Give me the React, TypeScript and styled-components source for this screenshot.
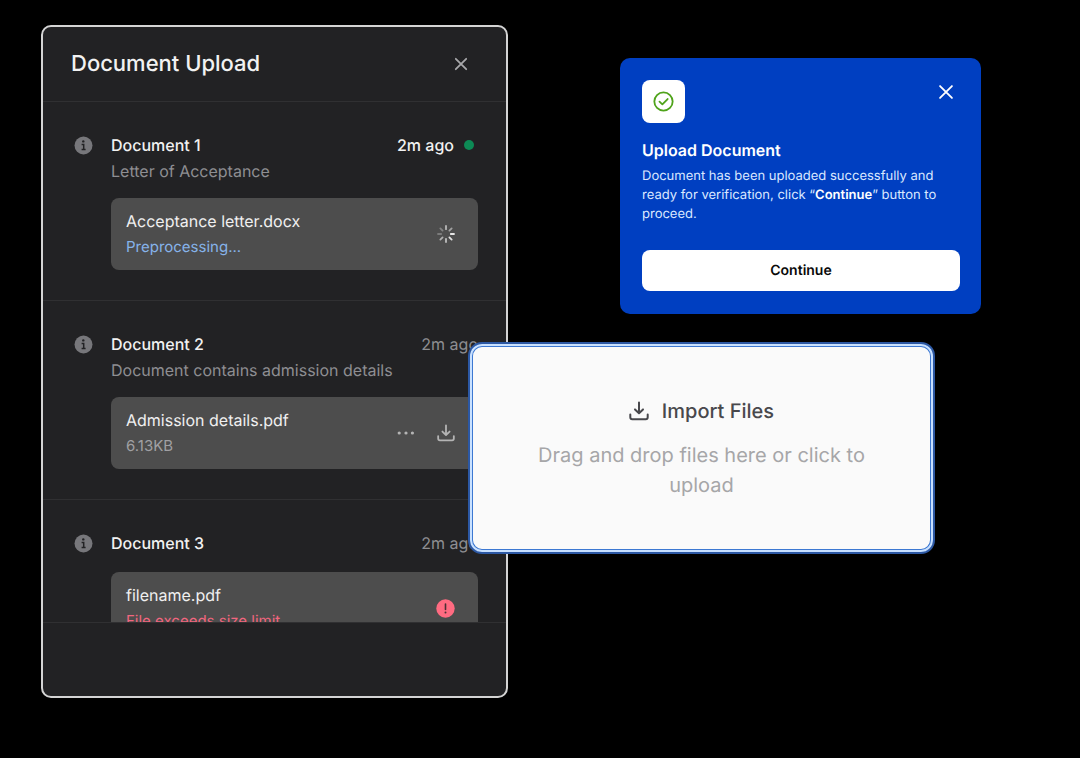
import React from "react";
import styled, { createGlobalStyle } from "styled-components";

const GlobalStyle = createGlobalStyle`
  *, *::before, *::after { box-sizing: border-box; }
  body {
    margin: 0;
    background: #000;
    font-family: Inter, "Liberation Sans", sans-serif;
    -webkit-font-smoothing: antialiased;
    text-rendering: geometricPrecision;
  }
  h1, h2, h3, p, ul { margin: 0; padding: 0; }
  button { font-family: inherit; text-rendering: inherit; cursor: pointer; }
`;

const Stage = styled.main`
  display: grid;
  grid-template-columns: minmax(0, 467px) minmax(0, 361px);
  column-gap: 112px;
  align-items: start;
  padding: 25px 41px;
`;

const Panel = styled.section`
  display: flex;
  flex-direction: column;
  background: #222224;
  border: 2px solid #d4d4d4;
  border-radius: 10px;
  overflow: hidden;
`;

const PanelHeader = styled.header`
  display: flex;
  align-items: center;
  justify-content: space-between;
  padding: 19px 38px 19px 28px;
  border-bottom: 1px solid #303032;
`;

const PanelTitle = styled.h1`
  font-size: 22px;
  line-height: 36px;
  font-weight: 500;
  color: #f2f2f2;
`;

const IconButton = styled.button<{ $color: string; $pad?: number }>`
  display: flex;
  padding: ${(p) => p.$pad ?? 0}px;
  border: 0;
  background: none;
  color: ${(p) => p.$color};
`;

const DocumentList = styled.ul`
  max-height: 520px;
  overflow-y: auto;
  scrollbar-width: none;
  list-style: none;
`;

const DocumentItem = styled.li`
  display: flex;
  align-items: flex-start;
  gap: 18px;
  padding: 29px 28px 30px 31px;

  & + & { border-top: 1px solid #303032; }
`;

const InfoMark = styled.span`
  display: flex;
  align-items: center;
  height: 28px;
`;

const DocumentBody = styled.div`
  flex: 1;
  min-width: 0;
`;

const TitleRow = styled.div`
  display: flex;
  align-items: center;
  justify-content: space-between;
`;

const DocumentTitle = styled.h2`
  font-size: 16px;
  line-height: 28px;
  font-weight: 500;
  color: #f2f2f2;
`;

const Time = styled.span<{ $fresh: boolean }>`
  display: flex;
  align-items: center;
  gap: 10px;
  padding-right: ${(p) => (p.$fresh ? "4px" : "0")};
  font-size: 16px;
  line-height: 28px;
  font-weight: ${(p) => (p.$fresh ? 500 : 400)};
  color: ${(p) => (p.$fresh ? "#f2f2f2" : "#8e8e92")};
`;

const FreshDot = styled.span`
  width: 10px;
  height: 10px;
  border-radius: 50%;
  background: #0d8a55;
`;

const Description = styled.p`
  font-size: 16px;
  line-height: 24px;
  color: #8e8e92;
`;

const FileCard = styled.div`
  display: flex;
  align-items: center;
  justify-content: space-between;
  margin-top: 15px;
  padding: 10px 23px 10px 15px;
  border-radius: 8px;
  background: #4d4d4d;
`;

const FileName = styled.h3`
  font-size: 16px;
  line-height: 26px;
  font-weight: 400;
  color: #f0f0f0;
`;

const statusColors = { busy: "#86b3ea", plain: "#a0a0a3", error: "#f2667f" };
type Tone = keyof typeof statusColors;

const FileStatus = styled.p<{ $tone: Tone }>`
  font-size: 15px;
  line-height: 26px;
  color: ${(p) => statusColors[p.$tone]};
`;

const Actions = styled.div`
  display: flex;
  align-items: center;
  gap: 22px;
`;

const PanelFooter = styled.footer`
  height: 74px;
  border-top: 1px solid #303032;
`;

const Side = styled.div`
  display: flex;
  flex-direction: column;
  gap: 28px;
  padding-top: 33px;
`;

const Notice = styled.section`
  padding: 22px 21px 23px 22px;
  border-radius: 10px;
  background: #003fc1;
  color: #fff;
`;

const NoticeTop = styled.div`
  display: flex;
  align-items: flex-start;
  justify-content: space-between;
  padding-right: 2px;
`;

const NoticeBadge = styled.span`
  display: flex;
  align-items: center;
  justify-content: center;
  width: 43px;
  height: 43px;
  border-radius: 8px;
  background: #fff;
`;

const NoticeTitle = styled.h2`
  margin-top: 15px;
  font-size: 16px;
  line-height: 24px;
  font-weight: 600;
`;

const NoticeText = styled.p`
  margin-top: 5px;
  font-size: 13px;
  line-height: 19px;
  color: #dbe8ff;

  strong { font-weight: 600; color: #fff; }
`;

const ContinueButton = styled.button`
  width: 100%;
  margin-top: 26px;
  padding: 9px 8px 8px;
  border: 0;
  border-radius: 8px;
  background: #fff;
  color: #0a0a0a;
  font-size: 14px;
  line-height: 24px;
  font-weight: 600;
`;

const DropZone = styled.button`
  position: relative;
  display: flex;
  flex-direction: column;
  align-items: center;
  justify-content: center;
  margin: 0 46px 0 -152px;
  padding: 52px 56px;
  border: 2px solid #2c58a4;
  border-radius: 14px;
  background: #fafafa;
  box-shadow: inset 0 0 0 2px #c9e1ff, inset 0 0 0 3px #3c78d2;
`;

const DropTitle = styled.span`
  display: flex;
  align-items: center;
  gap: 13px;
  margin-bottom: 14px;
  font-size: 20px;
  line-height: 30px;
  font-weight: 500;
  color: #48484c;
`;

const DropHint = styled.span`
  font-size: 20px;
  line-height: 30px;
  color: #a6a6a8;
`;

const CloseIcon = ({ size, stroke }: { size: number; stroke: number }) => (
  <svg width={size} height={size} viewBox="0 0 14 14" fill="none" stroke="currentColor" strokeWidth={stroke} strokeLinecap="round">
    <path d="M1.8 1.8 12.2 12.2M12.2 1.8 1.8 12.2" />
  </svg>
);

const InfoIcon = () => (
  <svg width="19" height="19" viewBox="0 0 19 19">
    <circle cx="9.5" cy="9.5" r="9" fill="#77777b" />
    <circle cx="9.3" cy="5.4" r="1.2" fill="#222224" />
    <path d="M7.6 8.6h2.1v5M7.6 13.6h4" fill="none" stroke="#222224" strokeWidth="1.5" />
  </svg>
);

const AlertIcon = () => (
  <svg width="19" height="19" viewBox="0 0 19 19">
    <circle cx="9.5" cy="9.5" r="9.2" fill="#ff6b81" />
    <path d="M9.5 5v5.4" stroke="#4a3034" strokeWidth="1.6" strokeLinecap="round" />
    <circle cx="9.5" cy="13.4" r="1" fill="#4a3034" />
  </svg>
);

const spokes = [1, 0.95, 0.75, 0.65, 0.3, 0.35, 0.7, 0.55];

const SpinnerIcon = () => (
  <svg width="18" height="18" viewBox="-9 -9 18 18" stroke="#e6e6e6" strokeWidth="1.8" strokeLinecap="round">
    {spokes.map((opacity, i) => (
      <path key={i} d="M4.8 0H8" opacity={opacity} transform={`rotate(${i * 45})`} />
    ))}
  </svg>
);

const MoreIcon = () => (
  <svg width="18" height="18" viewBox="0 0 18 18" fill="currentColor">
    <circle cx="2.2" cy="9" r="1.6" />
    <circle cx="9" cy="9" r="1.6" />
    <circle cx="15.4" cy="9" r="1.6" />
  </svg>
);

const DownloadIcon = ({ size, stroke }: { size: number; stroke: number }) => (
  <svg width={size} height={size} viewBox="0 0 20 20" fill="none" stroke="currentColor" strokeWidth={stroke} strokeLinecap="round" strokeLinejoin="round">
    <path d="M10 1.5v10.3M6 8.4 10 12.2l4-3.8" />
    <path d="M1.3 13.4v2.8a2 2 0 0 0 2 2h13.4a2 2 0 0 0 2-2v-2.8" />
  </svg>
);

const CheckIcon = () => (
  <svg width="21" height="21" viewBox="0 0 22 22" fill="none" stroke="#4fa31b" strokeWidth="1.9" strokeLinecap="round" strokeLinejoin="round">
    <circle cx="11" cy="11" r="9.6" />
    <path d="m6.8 11.2 3 2.8 5.5-5.6" />
  </svg>
);

type Doc = {
  title: string;
  description?: string;
  fresh?: boolean;
  file: string;
  status: string;
  tone: Tone;
};

const docs: Doc[] = [
  { title: "Document 1", description: "Letter of Acceptance", fresh: true, file: "Acceptance letter.docx", status: "Preprocessing...", tone: "busy" },
  { title: "Document 2", description: "Document contains admission details", file: "Admission details.pdf", status: "6.13KB", tone: "plain" },
  { title: "Document 3", file: "filename.pdf", status: "File exceeds size limit", tone: "error" },
];

const FileActions = ({ tone }: { tone: Tone }) => (
  <Actions>
    {tone === "busy" && <SpinnerIcon />}
    {tone === "error" && <AlertIcon />}
    {tone === "plain" && (
      <>
        <IconButton $color="#b4b4b4" aria-label="More options"><MoreIcon /></IconButton>
        <IconButton $color="#b4b4b4" aria-label="Download file"><DownloadIcon size={18} stroke={2} /></IconButton>
      </>
    )}
  </Actions>
);

export default function App() {
  return (
    <>
      <GlobalStyle />
      <Stage>
        <Panel>
          <PanelHeader>
            <PanelTitle>Document Upload</PanelTitle>
            <IconButton $color="#a8a8aa" aria-label="Close panel"><CloseIcon size={14} stroke={1.8} /></IconButton>
          </PanelHeader>
          <DocumentList>
            {docs.map((doc) => (
              <DocumentItem key={doc.title}>
                <InfoMark><InfoIcon /></InfoMark>
                <DocumentBody>
                  <TitleRow>
                    <DocumentTitle>{doc.title}</DocumentTitle>
                    <Time $fresh={!!doc.fresh}>2m ago{doc.fresh && <FreshDot />}</Time>
                  </TitleRow>
                  {doc.description && <Description>{doc.description}</Description>}
                  <FileCard>
                    <div>
                      <FileName>{doc.file}</FileName>
                      <FileStatus $tone={doc.tone}>{doc.status}</FileStatus>
                    </div>
                    <FileActions tone={doc.tone} />
                  </FileCard>
                </DocumentBody>
              </DocumentItem>
            ))}
          </DocumentList>
          <PanelFooter />
        </Panel>
        <Side>
          <Notice>
            <NoticeTop>
              <NoticeBadge><CheckIcon /></NoticeBadge>
              <IconButton $color="#fff" $pad={4} aria-label="Dismiss"><CloseIcon size={16} stroke={1.6} /></IconButton>
            </NoticeTop>
            <NoticeTitle>Upload Document</NoticeTitle>
            <NoticeText>
              Document has been uploaded successfully and ready for verification, click “<strong>Continue</strong>” button to proceed.
            </NoticeText>
            <ContinueButton>Continue</ContinueButton>
          </Notice>
          <DropZone>
            <DropTitle><DownloadIcon size={20} stroke={2} />Import Files</DropTitle>
            <DropHint>Drag and drop files here or click to upload</DropHint>
          </DropZone>
        </Side>
      </Stage>
    </>
  );
}
